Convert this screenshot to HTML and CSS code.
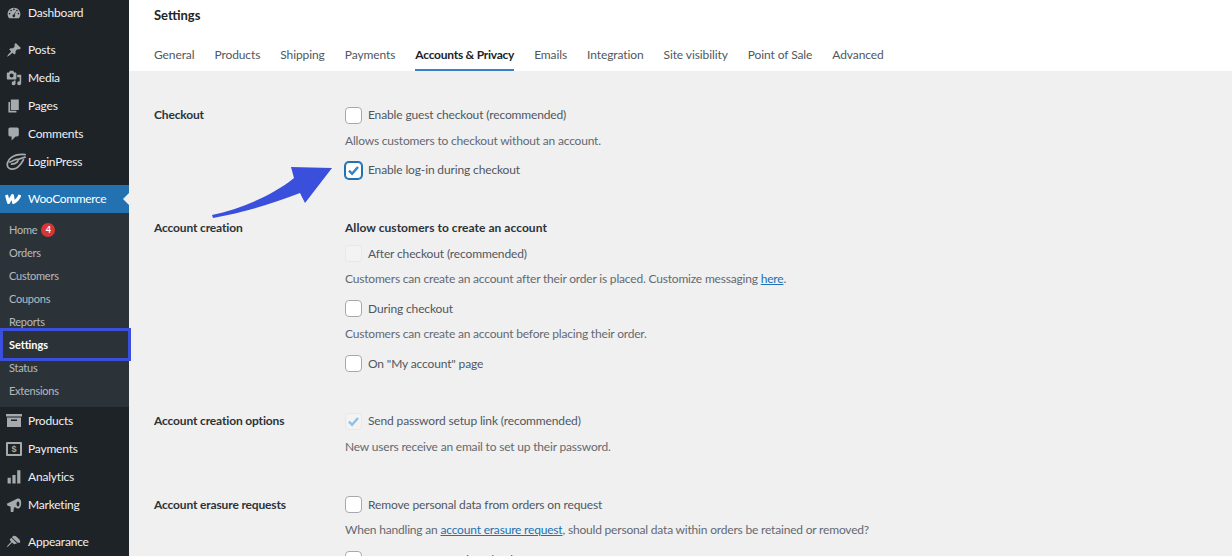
FILE: index.html
```html
<!DOCTYPE html>
<html lang="en">
<head>
<meta charset="utf-8">
<title>Settings</title>
<link rel="stylesheet" href="styles.css">
</head>
<body>
<div class="page">
  <nav class="sidebar">
    <ul class="menu first">
      <li class="item"><svg class="ic" viewBox="0 0 20 20"><path fill-rule="evenodd" d="M3.800 16.500h12.400c1.100-1.400 1.800-3.200 1.800-5.100 0-4.500-3.600-8-8-8s-8 3.500-8 8c0 1.900.7 3.700 1.800 5.100zM10 4.500a1 1 0 1 1 0 2 1 1 0 0 1 0-2zM6.300 6a1 1 0 1 1 0 2 1 1 0 0 1 0-2zM13.700 6a1 1 0 1 1 0 2 1 1 0 0 1 0-2zM4.500 9.800a1 1 0 1 1 0 2 1 1 0 0 1 0-2zM15.500 9.800a1 1 0 1 1 0 2 1 1 0 0 1 0-2zM12.800 7.500l-1.900 4.700a1.700 1.700 0 1 1-1.300-.4z"/></svg>Dashboard</li>
    </ul>
    <ul class="menu">
      <li class="item"><svg class="ic" viewBox="0 0 20 20"><path d="M10.440 3.020l1.820-1.820 6.360 6.350-1.830 1.820c-1.050-.68-2.480-.57-3.410.36l-.75.75c-.92.93-1.040 2.350-.35 3.410l-1.830 1.820-2.410-2.410-2.800 2.790c-.42.42-3.380 2.710-3.800 2.290s1.860-3.390 2.280-3.810l2.790-2.790L4.100 9.360l1.830-1.820c1.050.69 2.480.57 3.400-.36l.75-.75c.93-.92 1.050-2.350.36-3.410z"/></svg>Posts</li>
      <li class="item"><svg class="ic" viewBox="0 0 20 20"><path fill-rule="evenodd" d="M13 11V4c0-.55-.45-1-1-1h-1.670L9 1H5L3.670 3H2c-.55 0-1 .45-1 1v7c0 .55.45 1 1 1h10c.55 0 1-.45 1-1zM7 4.500a2.500 2.500 0 1 1 0 5 2.500 2.500 0 0 1 0-5zM14 6h5v10.500a2.500 2.500 0 1 1-2-2.450V9h-3V6zm-4 8.050V13h2v3.500a2.500 2.500 0 1 1-2-2.450z"/></svg>Media</li>
      <li class="item"><svg class="ic" viewBox="0 0 20 20"><path d="M6 15V2h10v13H6zm-1 1h8v2H3V5h2v11z"/></svg>Pages</li>
      <li class="item"><svg class="ic" viewBox="0 0 20 20"><path d="M5 2h9c1.100 0 2 .9 2 2v7c0 1.100-.9 2-2 2h-2l-5 5v-5H5c-1.100 0-2-.9-2-2V4c0-1.100.9-2 2-2z"/></svg>Comments</li>
      <li class="item"><svg class="ic wide" viewBox="0 0 24 20"><g class="swirl"><path d="M23 1.500C17 1 11 2 7 5 3 8 1.500 13 3.500 16c2.500 3.200 8 2.500 11.500-.5 2.500-2.200 4.500-5 6-8"/><path d="M5.500 10c3-.5 5-2.500 7.500-3 2-.3 2.500 1.500 1 3-1.800 1.700-4.500 2.500-6.500 2.500"/><path d="M23 4.500l-8 2.500"/></g></svg>LoginPress</li>
    </ul>
    <ul class="menu">
      <li class="item current"><svg class="ic" viewBox="0 0 16 16"><path class="woo" d="M1.500 4l2 7.500L7.500 4.500 8.500 11.500C11 10 13.800 7.500 14.800 4"/></svg>WooCommerce</li>
      <li class="submenu">
        <a>Home <span class="badge">4</span></a>
        <a>Orders</a>
        <a>Customers</a>
        <a>Coupons</a>
        <a>Reports</a>
        <a class="on">Settings</a>
        <a>Status</a>
        <a>Extensions</a>
      </li>
      <li class="item"><svg class="ic" viewBox="0 0 16 16"><path fill-rule="evenodd" d="M0 1h16v2.500H0zM1 4.500h14V14H1zM5 6.500V8h6V6.500z"/></svg>Products</li>
      <li class="item"><span class="pay">$</span>Payments</li>
      <li class="item"><svg class="ic" viewBox="0 0 20 20"><path d="M2 11h4v7H2zM8 7.500h4V18H8zM14 1.500h4V18h-4z"/></svg>Analytics</li>
      <li class="item"><svg class="ic" viewBox="0 0 20 20"><path fill-rule="evenodd" d="M1 8.500L12 3c2-1.700 5.500-1.700 6.500 1.500s.5 8-2 9.500c-1.500.8-3.300.3-4.500-.8l-2-.4-.8 6H6l-.4-6.800L2 11zM15 5.500c-1.100 0-1.800 1.500-1.800 3.300s.7 3.200 1.800 3.200 1.800-1.400 1.800-3.200-.7-3.300-1.800-3.300z"/></svg>Marketing</li>
    </ul>
    <ul class="menu">
      <li class="item"><svg class="ic" viewBox="0 0 20 20"><path d="M14.480 11.060L7.410 3.990l1.500-1.500c.5-.56 2.300-.47 3.510.32 1.210.8 1.430 1.280 2.420 2.270.99.99 1.470 1.210 2.270 2.420.79 1.210.88 3.010.32 3.510zm-.71.71L6.700 4.700 4.930 6.470c-.39.39-.39 1.020 0 1.410l1.060 1.060c.39.39.39 1.030 0 1.420-.6.6-1.430 1.270-2.210 2.050-2.060 2.060-3.020 3.650-2.760 3.910.27.27 1.850-.7 3.910-2.760.78-.78 1.450-1.610 2.050-2.210.39-.39 1.020-.39 1.410 0l1.060 1.060c.39.39 1.020.39 1.410 0z"/></svg>Appearance</li>
    </ul>
  </nav>
  <main class="main">
    <header class="head">
      <h1 class="title">Settings</h1>
      <div class="tabs">
        <a>General</a><a>Products</a><a>Shipping</a><a>Payments</a><a class="active">Accounts &amp; Privacy</a><a>Emails</a><a>Integration</a><a>Site visibility</a><a>Point of Sale</a><a>Advanced</a>
      </div>
    </header>
    <div class="form">
      <section class="row">
        <div class="label">Checkout</div>
        <div class="fields">
          <label class="opt"><span class="cb"></span>Enable guest checkout (recommended)</label>
          <p class="desc">Allows customers to checkout without an account.</p>
          <label class="opt"><span class="cb checked"><svg viewBox="0 0 16 16"><path d="M3.200 8.200l3.300 3.300 6.300-7.300"/></svg></span>Enable log-in during checkout</label>
        </div>
      </section>
      <section class="row">
        <div class="label">Account creation</div>
        <div class="fields">
          <div class="subhead">Allow customers to create an account</div>
          <label class="opt"><span class="cb disabled"></span>After checkout (recommended)</label>
          <p class="desc">Customers can create an account after their order is placed. Customize messaging <a class="link">here</a>.</p>
          <label class="opt"><span class="cb"></span>During checkout</label>
          <p class="desc">Customers can create an account before placing their order.</p>
          <label class="opt"><span class="cb"></span>On "My account" page</label>
        </div>
      </section>
      <section class="row">
        <div class="label">Account creation options</div>
        <div class="fields">
          <label class="opt"><span class="cb disabled"><svg viewBox="0 0 16 16"><path d="M3.200 8.200l3.300 3.300 6.300-7.300"/></svg></span>Send password setup link (recommended)</label>
          <p class="desc">New users receive an email to set up their password.</p>
        </div>
      </section>
      <section class="row last">
        <div class="label">Account erasure requests</div>
        <div class="fields">
          <label class="opt"><span class="cb"></span>Remove personal data from orders on request</label>
          <p class="desc">When handling an <a class="link">account erasure request</a>, should personal data within orders be retained or removed?</p>
          <label class="opt"><span class="cb"></span>Remove access to downloads on request</label>
        </div>
      </section>
    </div>
  </main>
  <div class="mark"></div>
  <svg class="arrow" viewBox="0 0 130 60"><path d="M2 49C30 43 62 30 84 12L81 1l41 1-27 35-5-10C62 38 35 46 3 52z"/></svg>
</div>
</body>
</html>
```
FILE: styles.css
```css
* { box-sizing: border-box; }
html, body { margin: 0; height: 100%; }
body { overflow: hidden; font-family: "Lato", "Open Sans", sans-serif; font-size: 12px; }
.page { position: relative; display: flex; width: 1232px; height: 556px; overflow: hidden; background: #f0f0f1; }

.sidebar { flex: none; width: 129px; height: 556px; overflow: hidden; background: #1d2327; color: #f0f0f1; letter-spacing: -.2px; }
.menu { list-style: none; margin: 9px 0 0; padding: 0; }
.menu.first { margin-top: -1px; }
.item { display: flex; align-items: center; height: 28px; padding: 0 0 2px 6px; }
.ic { flex: none; width: 16px; height: 16px; margin: 2px 6px 0 0; fill: #a7aaad; }
.ic.wide { width: 21px; height: 18px; margin: 2px 2px 0 -1px; }
.swirl { fill: none; stroke: #a7aaad; stroke-width: 2; stroke-linecap: round; }
.woo { fill: none; stroke: #fff; stroke-width: 3; stroke-linejoin: round; }
.current { position: relative; background: #2271b1; color: #fff; letter-spacing: -.35px; }
.current .ic { margin-left: -1px; margin-right: 7px; }
.current::after { content: ""; position: absolute; right: 0; top: 8px; border: 6px solid transparent; border-left-width: 0; border-right-color: #f0f0f1; }
.pay { flex: none; width: 16px; height: 14px; margin: 2px 6px 0 0; border: 2px solid #a7aaad; border-radius: 1px; color: #a7aaad; font: 700 9px/10px "Liberation Sans", sans-serif; text-align: center; }
.submenu { display: flex; flex-direction: column; padding: 5px 0; background: #2c3338; font-size: 11px; letter-spacing: -.25px; color: rgba(240, 246, 252, .7); }
.submenu a { display: flex; align-items: center; gap: 4px; height: 23px; padding-left: 9px; }
.submenu .on { font-weight: 700; color: #fff; letter-spacing: -.1px; }
.badge { display: inline-block; width: 14px; height: 14px; border-radius: 50%; background: #d63638; color: #fff; font-size: 9px; font-weight: 700; line-height: 14px; text-align: center; }
.mark { position: absolute; left: 0; top: 328px; width: 131px; height: 33px; border: 3px solid #3a4fdc; }
.arrow { position: absolute; left: 210px; top: 166px; width: 130px; height: 60px; fill: #3a4fdc; }

.main { flex: 1; min-width: 0; }
.head { height: 71px; padding: 6px 0 0 25px; background: #fff; }
.title { margin: 0; font-size: 13px; font-weight: 700; line-height: 18px; color: #1d2327; }
.tabs { display: flex; gap: 20px; margin-top: 13px; color: #50575e; letter-spacing: -.1px; }
.tabs a { display: block; height: 34px; padding-top: 9px; line-height: 18px; }
.tabs .active { font-weight: 700; color: #1d2327; letter-spacing: -.25px; border-bottom: 2px solid #3582c4; }

.form { padding-top: 34px; padding-left: 25px; color: #50575e; }
.row { display: flex; margin-bottom: 37.500px; }
.row.last { margin-top: 38px; }
.label { flex: none; width: 191px; font-weight: 700; letter-spacing: -.15px; line-height: 20px; color: #2c3338; }
.fields { flex: 1; }
.opt { display: flex; align-items: center; gap: 6px; height: 20px; line-height: 20px; letter-spacing: -.14px; }
.desc { margin: 5.500px 0 9.500px; line-height: 20px; letter-spacing: -.19px; color: #646970; }
.desc:last-child { margin-bottom: 0; }
.subhead { margin-bottom: 6px; font-weight: 700; letter-spacing: .05px; line-height: 20px; color: #2c3338; }
.link { color: #2271b1; text-decoration: underline; }
.cb { flex: none; display: block; width: 17px; height: 17px; border: 1px solid #a7aaad; border-radius: 4px; background: #fff; }
.cb svg { display: block; width: 15px; height: 15px; fill: none; stroke: #3582c4; stroke-width: 2.600; }
.cb.checked { border-color: #2271b1; box-shadow: 0 0 0 1px #2271b1; }
.cb.disabled { border-color: #e8e8e9; background: #f3f3f3; }
.cb.disabled svg { stroke: #8fc1e6; }
```
